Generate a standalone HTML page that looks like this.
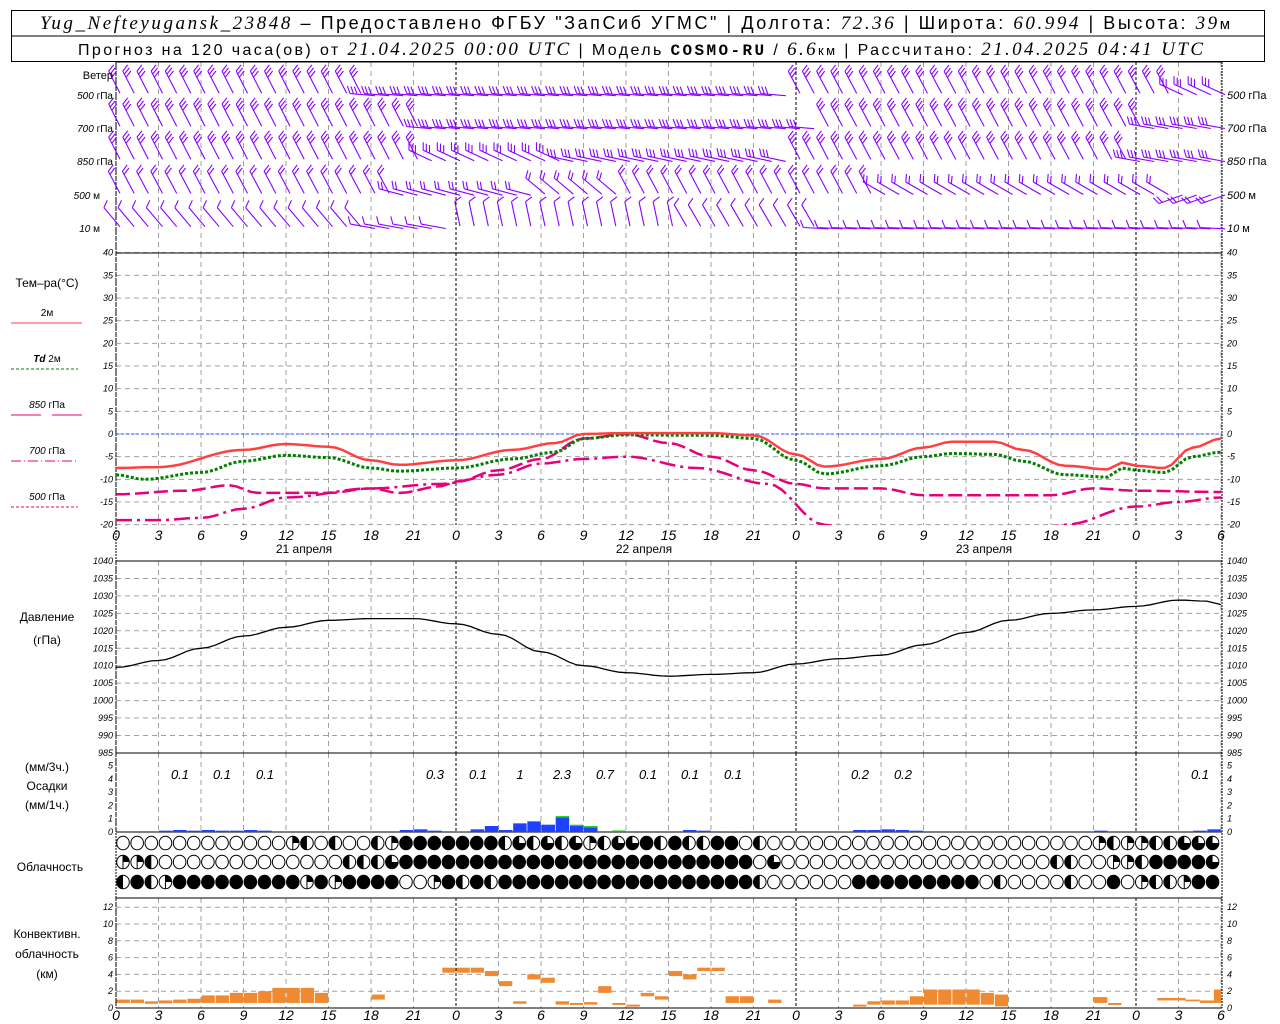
<!DOCTYPE html>
<html><head><meta charset="utf-8"><style>
html,body{margin:0;padding:0;background:#fff;}
svg{display:block;font-family:"Liberation Sans",sans-serif;}
.t{font-size:11px;fill:#000}
.n{font-size:9px;font-style:italic;fill:#000;font-family:"Liberation Sans",sans-serif}
.ax{font-size:14px;font-style:italic;fill:#000;font-family:"Liberation Sans",sans-serif}
.h{font-size:18px;fill:#000}
.hi{font-size:19px;font-style:italic;font-family:"Liberation Serif",serif}
.p{font-size:13px;font-style:italic}
</style></head><body>
<svg id="s" width="1280" height="1024" viewBox="0 0 1280 1024" xmlns="http://www.w3.org/2000/svg">
<rect x="0" y="0" width="1280" height="1024" fill="#fff"/>
<g id="grid"></g><g id="data"></g>
<rect x="11.5" y="10.5" width="1253" height="51" fill="none" stroke="#000"/>
<line x1="11" y1="36" x2="1265" y2="36" stroke="#000"/>
<text x="40" y="29" class="h" textLength="1190" lengthAdjust="spacing"><tspan class="hi">Yug_Nefteyugansk_23848</tspan> – Предоставлено ФГБУ "ЗапСиб УГМС" | Долгота: <tspan class="hi">72.36</tspan> | Широта: <tspan class="hi">60.994</tspan> | Высота: <tspan class="hi">39</tspan><tspan font-size="15">м</tspan></text>
<text x="78" y="55" font-size="16" textLength="1125" lengthAdjust="spacing">Прогноз на 120 часа(ов) от <tspan class="hi" font-size="17">21.04.2025 00:00 UTC</tspan> | Модель <tspan font-family="Liberation Mono" font-weight="bold">COSMO-RU</tspan> / <tspan class="hi" font-size="17">6.6</tspan><tspan font-size="13">км</tspan> | Рассчитано: <tspan class="hi" font-size="17">21.04.2025 04:41 UTC</tspan></text>
<g class="t" text-anchor="end">
<text x="113" y="79">Ветер</text>
<text x="113" y="99" font-size="10"><tspan font-style="italic">500</tspan> гПа</text>
<text x="113" y="132" font-size="10"><tspan font-style="italic">700</tspan> гПа</text>
<text x="113" y="165" font-size="10"><tspan font-style="italic">850</tspan> гПа</text>
<text x="100" y="199" font-size="10"><tspan font-style="italic">500</tspan> м</text>
<text x="100" y="232" font-size="10"><tspan font-style="italic">10</tspan>   м</text>
</g>
<g class="t" font-size="10">
<text x="1227" y="99"><tspan font-style="italic">500</tspan> гПа</text>
<text x="1227" y="132"><tspan font-style="italic">700</tspan> гПа</text>
<text x="1227" y="165"><tspan font-style="italic">850</tspan> гПа</text>
<text x="1227" y="199"><tspan font-style="italic">500</tspan> м</text>
<text x="1227" y="232"><tspan font-style="italic">10</tspan>   м</text>
</g>
<g class="t" text-anchor="middle">
<text x="47" y="287" font-size="12">Тем–ра(°С)</text>
<text x="47" y="316" font-size="10">2м</text>
<text x="47" y="362" font-size="10"><tspan font-style="italic" font-weight="bold">Td</tspan>  2м</text>
<text x="47" y="408" font-size="10"><tspan font-style="italic">850</tspan> гПа</text>
<text x="47" y="454" font-size="10"><tspan font-style="italic">700</tspan> гПа</text>
<text x="47" y="500" font-size="10"><tspan font-style="italic">500</tspan> гПа</text>
<text x="47" y="621" font-size="12">Давление</text>
<text x="47" y="644" font-size="12">(гПа)</text>
<text x="47" y="771" font-size="12">(мм/3ч.)</text>
<text x="47" y="790" font-size="12">Осадки</text>
<text x="47" y="809" font-size="12">(мм/1ч.)</text>
<text x="50" y="871" font-size="12">Облачность</text>
<text x="47" y="938" font-size="12">Конвективн.</text>
<text x="47" y="958" font-size="12">облачность</text>
<text x="47" y="978" font-size="12">(км)</text>
<text x="304" y="553" font-size="12">21 апреля</text>
<text x="644" y="553" font-size="12">22 апреля</text>
<text x="984" y="553" font-size="12">23 апреля</text>
</g>
<line x1="11" y1="323" x2="82" y2="323" stroke="#ff4040"/>
<line x1="11" y1="369" x2="78" y2="369" stroke="#008000" stroke-dasharray="3,2"/>
<line x1="11" y1="415" x2="41" y2="415" stroke="#e8007a"/><line x1="52" y1="415" x2="82" y2="415" stroke="#e8007a"/>
<line x1="11" y1="461" x2="78" y2="461" stroke="#e8007a" stroke-dasharray="10,3,1,3"/>
<line x1="11" y1="507" x2="78" y2="507" stroke="#e8007a" stroke-dasharray="3,2"/>
<g class="p" text-anchor="middle">
<text x="180" y="779">0.1</text><text x="222" y="779">0.1</text><text x="265" y="779">0.1</text>
<text x="435" y="779">0.3</text><text x="478" y="779">0.1</text><text x="520" y="779">1</text>
<text x="562" y="779">2.3</text><text x="605" y="779">0.7</text><text x="648" y="779">0.1</text>
<text x="690" y="779">0.1</text><text x="733" y="779">0.1</text><text x="860" y="779">0.2</text>
<text x="903" y="779">0.2</text><text x="1200" y="779">0.1</text>
</g>
<g id="labels"></g>
</svg>
<script>
var NS="http://www.w3.org/2000/svg";
function el(p,t,a){var e=document.createElementNS(NS,t);for(var k in a)e.setAttribute(k,a[k]);p.appendChild(e);return e;}
var G=document.getElementById('grid'),D=document.getElementById('data'),L=document.getElementById('labels');
function X(h){return 116+h*340/24;}
var L0=116,R0=1222,HM=78;
for(var h=0;h<=HM;h+=3){var x=X(h);var day=(h%24==0);
 [[62,253],[253,525],[561,753],[753,832],[898,1008]].forEach(function(r){
  el(G,'line',{x1:x,y1:r[0],x2:x,y2:r[1],stroke:day?'#000':'#a0a0a0','stroke-dasharray':day?'3,2':'5,4'});});
 var lb=(h%24)+'';
 [535,1015].forEach(function(y){var t=el(L,'text',{x:x,y:y+5,'text-anchor':'middle','class':'ax'});t.textContent=lb;});
}
function hg(y){el(G,'line',{x1:L0,y1:y,x2:R0,y2:y,stroke:'#a0a0a0','stroke-dasharray':'5,4'});}
function tick(y,txt){var a=el(L,'text',{x:113,y:y+3,'text-anchor':'end','class':'n'});a.textContent=txt;var b=el(L,'text',{x:1227,y:y+3,'class':'n'});b.textContent=txt;}
for(var T=-20;T<=40;T+=5){var y=434-T*4.533;hg(y);tick(y,T);}
for(var P=985;P<=1040;P+=5){var y=561+(1040-P)*3.49;hg(y);tick(y,P);}
for(var m=0;m<=5;m++){tick(832-m*13.3,m);}
for(var k=0;k<=12;k+=2){var y=1008-k*8.4;if(k>0)hg(y);tick(y,k);}
[62,253,561,753,832,898,1008].forEach(function(y){el(G,'line',{x1:L0,y1:y,x2:R0,y2:y,stroke:'#000'});});
el(G,'line',{x1:L0,y1:62,x2:L0,y2:1008,stroke:'#000','stroke-dasharray':'2,1'});
el(G,'line',{x1:R0,y1:62,x2:R0,y2:1008,stroke:'#000','stroke-dasharray':'2,1'});
el(G,'line',{x1:L0,y1:434,x2:R0,y2:434,stroke:'#3050ff','stroke-dasharray':'3,2'});
function interp(pts,h){for(var i=0;i<pts.length-1;i++){if(h<=pts[i+1][0]){var a=pts[i],b=pts[i+1],f=(h-a[0])/(b[0]-a[0]);return a[1]+(b[1]-a[1])*(0.5-0.5*Math.cos(Math.PI*f));}}return pts[pts.length-1][1];}
function path(pts,fy){var d='';for(var h=0;h<=HM;h+=0.5){d+=(d?'L':'M')+X(h).toFixed(1)+','+fy(interp(pts,h)).toFixed(1);}return d;}
var ty=function(T){return 434-T*4.533;};
var red=[[0,-7.5],[3,-7.3],[9,-3.5],[12,-2.2],[15,-2.8],[18,-5.8],[20,-6.8],[24,-5.8],[28,-3.5],[31,-2],[33,0],[36,0.2],[42,0.2],[45,-0.3],[48,-4.5],[50,-7.2],[54,-5.5],[57,-3],[59,-1.7],[62,-1.7],[64,-3.5],[67,-7],[70,-7.8],[71,-6.3],[72,-7],[74,-7.5],[76,-3],[78,-1]];
var grn=[[0,-9],[2,-10],[6,-8.5],[9,-6],[12,-4.7],[15,-5.2],[18,-7.5],[20,-8.2],[24,-7.5],[28,-5.5],[31,-4],[33,-1],[36,-0.2],[42,-0.3],[45,-1],[48,-5.8],[50,-8.8],[54,-7],[57,-5],[59,-4.3],[62,-4.5],[64,-6],[67,-9],[70,-9.5],[71,-7.5],[72,-8],[74,-8.5],[76,-5],[78,-4]];
var p850=[[0,-13.3],[5,-12.5],[8,-11.3],[10,-13],[15,-13],[18,-12],[20,-13],[23,-11.5],[24,-10.5],[27,-8],[30,-5.5],[33,-1],[36,0],[39,-2],[42,-5],[45,-8],[48,-11],[50,-12],[54,-12],[57,-13.5],[66,-13.5],[69,-12],[72,-12.5],[78,-12.8]];
var p700=[[0,-19],[3,-19],[6,-18.5],[9,-16.5],[12,-14],[18,-12],[23,-11],[27,-9],[30,-6.5],[33,-5.5],[36,-5],[41,-7.5],[46,-11],[50,-20],[53,-23],[64,-23],[67,-20],[72,-16],[75,-15],[78,-14]];
var cp=el(D,'clipPath',{id:'cp'});el(cp,'rect',{x:116,y:253,width:1106,height:272});
var gc=el(D,'g',{'clip-path':'url(#cp)'});
el(gc,'path',{d:path(p700,ty),fill:'none',stroke:'#e8007a','stroke-width':2.5,'stroke-dasharray':'16,5,3,5'});
el(gc,'path',{d:path(p850,ty),fill:'none',stroke:'#e8007a','stroke-width':2.5,'stroke-dasharray':'14,5'});
el(gc,'path',{d:path(grn,ty),fill:'none',stroke:'#008000','stroke-width':3,'stroke-dasharray':'3,2'});
el(gc,'path',{d:path(red,ty),fill:'none',stroke:'#ff4040','stroke-width':2.5});
var pr=[[0,1009.5],[3,1011.5],[6,1015],[9,1018.5],[12,1021],[15,1023],[18,1023.5],[21,1023.5],[24,1022],[27,1019],[30,1014],[33,1010],[36,1008],[39,1007],[42,1007.5],[45,1008],[48,1010.5],[51,1012],[54,1013],[57,1016],[60,1019.5],[63,1023],[66,1025],[69,1026],[72,1027],[75,1028.8],[77,1028.5],[78,1027.5]];
el(D,'path',{d:path(pr,function(P){return 561+(1040-P)*3.49;}),fill:'none',stroke:'#000','stroke-width':1.3});
var pc={4:0.1,5:0.15,6:0.1,7:0.15,8:0.1,9:0.1,10:0.15,11:0.1,21:0.15,22:0.2,23:0.1,25:0.05,26:0.2,27:0.45,28:0.15,29:0.65,30:0.8,31:0.55,32:1.1,33:0.45,34:0.35,36:0.05,41:0.15,42:0.1,44:0.05,52:0.05,53:0.15,54:0.15,55:0.2,56:0.15,57:0.1,70:0.1,77:0.1,78:0.2};
for(var k in pc){var h=+k,v=pc[k];el(D,'rect',{x:X(h-1)+0.5,y:832-v*13.3,width:13.5,height:v*13.3,fill:'#2040ff'});}
[[32,0.1],[33,0.1],[34,0.1],[36,0.07]].forEach(function(a){el(D,'rect',{x:X(a[0]-1)+0.5,y:832-(pc[a[0]]||0)*13.3-a[1]*13.3,width:13.5,height:a[1]*13.3,fill:'#20d020'});});
var rows=['0000000000003202002311111112424243244121221102000000000000000000000003233224442',
          '3320000000000000222411111111111111111111111110400000000000000000002200332111141',
          '21231111111113131111003121211111111111111111120000001111111110200002001032231111'];
var cy=[843,862,882];
for(var r=0;r<3;r++){for(var i=0;i<78;i++){var x=123+i*14.15;var c=rows[r][i]||'0';
 el(D,'ellipse',{cx:x,cy:cy[r],rx:6.3,ry:6.8,fill:c=='1'?'#000':'#fff',stroke:'#000','stroke-width':1});
 if(c=='2'){el(D,'path',{d:'M'+x+','+(cy[r]-6.8)+'A6.3,6.8 0 0 0 '+x+','+(cy[r]+6.8)+'Z',fill:'#000'});}
 if(c=='3'){el(D,'path',{d:'M'+x+','+cy[r]+'L'+x+','+(cy[r]-6.8)+'A6.3,6.8 0 0 1 '+(x+6.3)+','+cy[r]+'Z',fill:'#000'});el(D,'line',{x1:x,y1:cy[r]-6.8,x2:x,y2:cy[r]+6.8,stroke:'#000'});}
 if(c=='4'){el(D,'path',{d:'M'+x+','+cy[r]+'L'+(x+6.3)+','+cy[r]+'A6.3,6.8 0 1 1 '+x+','+(cy[r]-6.8)+'Z',fill:'#000'});}
}}
var cv=[[0,0.6,1],[1,0.6,1],[2,0.5,0.8],[3,0.55,0.9],[4,0.6,1],[5,0.6,1.1],[6,0.6,1.5],[7,0.6,1.5],[8,0.6,1.8],[9,0.6,1.8],[10,0.6,2],[11,0.6,2.4],[12,0.6,2.4],[13,0.6,2.4],[14,0.6,1.8],[18,1,1.6],[23,4.2,4.8],[24,4.2,4.8],[25,4.2,4.8],[26,3.8,4.4],[27,2.6,3.2],[28,0.5,0.8],[29,3.4,4],[30,3,3.6],[31,0.4,0.8],[32,0.4,0.6],[33,0.4,0.7],[34,1.8,2.6],[35,0.4,0.6],[36,0.3,0.4],[37,1.4,1.8],[38,1,1.4],[39,3.8,4.4],[40,3.4,4],[41,4.4,4.8],[42,4.4,4.8],[43,0.6,1.4],[44,0.6,1.4],[46,0.6,1],[52,0.3,0.4],[53,0.4,0.8],[54,0.4,0.9],[55,0.4,0.9],[56,0.4,1.4],[57,0.4,2.2],[58,0.4,2.2],[59,0.4,2.2],[60,0.4,2.2],[61,0.4,1.8],[62,0.2,1.6],[69,0.6,1.3],[70,0.4,0.6]];
cv.forEach(function(a){var y1=1008-a[2]*8.4,y0=1008-a[1]*8.4;el(D,'rect',{x:X(a[0])+0.5,y:y1,width:13.3,height:Math.max(2,y0-y1),fill:'#f08a30'});});
[[73.5,75.5,0.9,1.2],[75.5,76.5,0.8,1],[76.5,77.5,0.6,0.9],[77.5,78,0.6,2.2]].forEach(function(a){var y1=1008-a[3]*8.4,y0=1008-a[2]*8.4;el(D,'rect',{x:X(a[0]),y:y1,width:X(a[1])-X(a[0]),height:y0-y1,fill:'#f08a30'});});
var wy=[95,128,161,195,228];
function ang(r,h){
 if(r==0){if(h<18)return -27;if(h<48)return -85;if(h<75)return -28;return -65;}
 if(r==1){if(h<22)return -27;if(h<50)return -85;if(h<73)return -28;return -80;}
 if(r==2){if(h<22)return -27;if(h<32)return -65;if(h<48)return -78;if(h<72)return -28;return -80;}
 if(r==3){if(h<20)return -28;if(h<30)return -75;if(h<36)return -50;if(h<54)return -28;if(h<75)return -60;return -110;}
 if(h<18)return -40;if(h<24)return -80;if(h<40)return -12;if(h<50)return -30;return -87;}
var WG=el(D,'g',{stroke:'#8a00ff','stroke-width':1.1,fill:'none'});
for(var r=0;r<5;r++){for(var h=0;h<=HM;h+=1){var x=X(h)+4;var a=ang(r,h)*Math.PI/180;var len=25;
 var dx=Math.sin(a),dy=-Math.cos(a);var bx=x,by=wy[r]-3*Math.abs(Math.cos(a))+1;var tx=bx+dx*len,tY=by+dy*len;
 var d='M'+bx.toFixed(1)+','+by.toFixed(1)+'L'+tx.toFixed(1)+','+tY.toFixed(1);
 var nf=(r==4)?1:(r==3?2:3);var fa=a+65*Math.PI/180;var fx=Math.sin(fa),fy=-Math.cos(fa);
 for(var f=0;f<nf;f++){var sx=tx-dx*f*3.5,sy=tY-dy*f*3.5;d+='M'+sx.toFixed(1)+','+sy.toFixed(1)+'l'+(fx*8).toFixed(1)+','+(fy*8).toFixed(1);}
 el(WG,'path',{d:d});}}
</script>
</body></html>
